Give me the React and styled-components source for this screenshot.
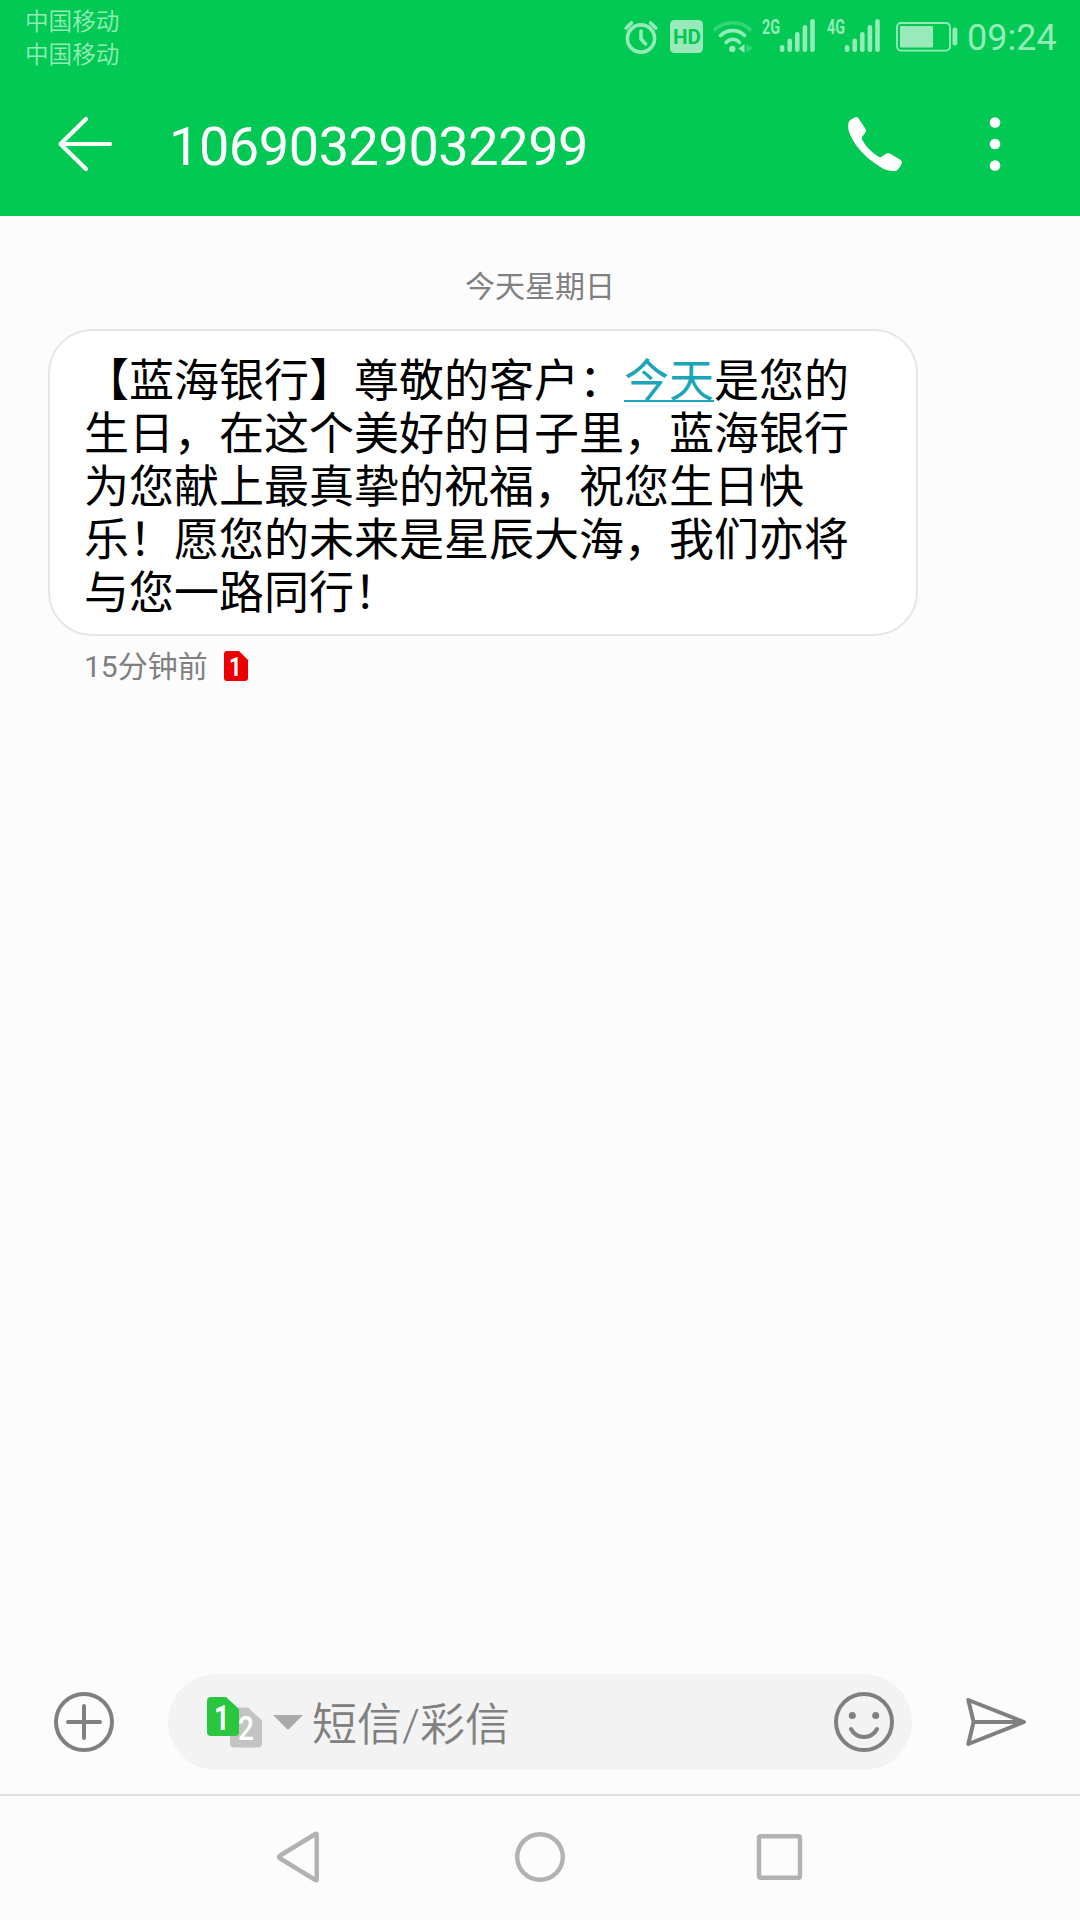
import React from 'react';
import styled, { createGlobalStyle } from 'styled-components';

const GlobalStyle = createGlobalStyle`
  *, *::before, *::after {
    box-sizing: border-box;
  }
  body {
    margin: 0;
    background: #fcfcfc;
    font-family: Roboto, 'Noto Sans CJK SC', sans-serif;
  }
  svg {
    display: block;
    flex-shrink: 0;
    overflow: visible;
  }
`;

const Screen = styled.div`
  display: flex;
  flex-direction: column;
  width: 1080px;
  height: 1920px;
  background: #fcfcfc;
  overflow: hidden;
`;

const StatusBar = styled.div`
  display: flex;
  justify-content: space-between;
  height: 72px;
  padding: 6px 22px 0 25px;
  background: #02c953;
  color: #93ecb8;
`;

const Carriers = styled.div`
  font-size: 23.6px;
  font-weight: 350;
  line-height: 33px;
`;

const StatusIcons = styled.div`
  display: flex;
  align-items: flex-start;
  padding-top: 14px;
`;

const Slot = styled.div`
  margin-left: ${({ gap }) => gap}px;
`;

const Clock = styled.div`
  width: 91px;
  margin: -3px 0 0 9px;
  font-size: 36px;
  line-height: 42px;
  white-space: nowrap;
`;

const AppBar = styled.header`
  display: flex;
  align-items: center;
  height: 144px;
  padding: 0 79px 0 56px;
  background: #02c953;
  color: #fff;
`;

const Title = styled.h1`
  flex: 1;
  margin: 6px 0 0 53px;
  font-size: 54px;
  font-weight: 400;
  line-height: 64px;
  letter-spacing: -0.42px;
`;

const Thread = styled.main`
  flex: 1;
  display: flex;
  flex-direction: column;
  align-items: flex-start;
  padding: 49px 48px 0;
`;

const DateLabel = styled.div`
  align-self: center;
  color: #808080;
  font-size: 30px;
  line-height: 44px;
`;

const Bubble = styled.div`
  width: 870px;
  height: 307px;
  margin-top: 20px;
  padding: 24px 60px 0 34px;
  border: 2px solid #e6e6e6;
  border-radius: 44px;
  background: #fff;
  color: #000;
  font-size: 45px;
  line-height: 53px;
  text-spacing-trim: space-all;
`;

const DateLink = styled.a`
  color: #1ba5b8;
  text-decoration: underline;
  text-decoration-thickness: 2px;
  text-underline-offset: 3px;
`;

const Meta = styled.div`
  display: flex;
  align-items: center;
  gap: 16px;
  margin: 7px 0 0 36px;
  color: #808080;
  font-size: 30px;
  line-height: 44px;
`;

const MetaTime = styled.span`
  padding-top: 2px;
`;

const Composer = styled.div`
  display: flex;
  align-items: center;
  height: 144px;
  padding: 0 54px;
`;

const Field = styled.div`
  display: flex;
  align-items: center;
  width: 744px;
  height: 96px;
  margin: 0 54px;
  padding: 0 18px 0 39px;
  border-radius: 48px;
  background: #f3f3f3;
`;

const Placeholder = styled.span`
  flex: 1;
  margin-left: 9px;
  padding-top: 8px;
  color: #808080;
  font-size: 45px;
  font-weight: 350;
  line-height: 60px;
`;

const NavBar = styled.nav`
  display: flex;
  justify-content: center;
  align-items: center;
  gap: 188px;
  height: 126px;
  padding-bottom: 2px;
  border-top: 2px solid #e0e0e0;
`;

const AlarmIcon = () => (
  <svg width="34" height="34" viewBox="0 0 34 34" fill="none" stroke="currentColor" strokeWidth="3.6" strokeLinecap="round">
    <circle cx="17" cy="18.5" r="13.6" />
    <path d="M2.2 8 7.4 3M31.8 8 26.6 3" />
    <path d="M17 11v8l4.6 5" />
  </svg>
);

const HdIcon = () => (
  <svg width="33" height="33" viewBox="0 0 33 33">
    <rect width="33" height="33" rx="4.5" fill="#99e9bb" />
    <text x="3" y="24" fontSize="21" fontWeight="700" fill="#02c953" textLength="28" lengthAdjust="spacingAndGlyphs">
      HD
    </text>
  </svg>
);

const WifiIcon = () => (
  <svg width="40" height="34" viewBox="0 0 40 34" fill="none" stroke="currentColor" strokeWidth="3.6" strokeLinecap="round">
    <path d="M2 9.5C12 .5 28 .5 37 9.5" opacity=".35" />
    <path d="M7.5 15.5C14.5 9 25 9 31.5 15.5" />
    <path d="M13 22.5c4-4.4 10-4.4 13.5 0" />
    <circle cx="19.3" cy="29" r="3.2" fill="currentColor" stroke="none" />
    <path d="M31.5 24v9l-6-4.5z" fill="currentColor" stroke="none" />
    <path d="M33.5 24v9l6-5z" fill="currentColor" stroke="none" opacity=".35" />
  </svg>
);

const SIGNAL_BARS = [26, 19.5, 13, 6, 0];

const SignalIcon = ({ network }) => (
  <svg width="53" height="34" viewBox="0 0 53 34" fill="currentColor">
    <text x="0" y="14" fontSize="20.5" fontWeight="700" textLength="18" lengthAdjust="spacingAndGlyphs">
      {network}
    </text>
    {SIGNAL_BARS.map((top, i) => (
      <rect key={top} x={17.8 + i * 7.6} y={top - 1} width="4.6" height={33 - top} rx="2.2" />
    ))}
  </svg>
);

const BatteryIcon = () => (
  <svg width="62" height="32" viewBox="0 -2 62 32">
    <rect x="1" y="1" width="53" height="27.6" rx="4" fill="none" stroke="currentColor" strokeWidth="1.8" />
    <rect x="4" y="4" width="33" height="21.4" rx="1" fill="#99e9bb" />
    <rect x="56.5" y="5.5" width="4.8" height="18" rx="2.2" fill="currentColor" />
  </svg>
);

const BackIcon = () => (
  <svg width="60" height="60" viewBox="0 0 60 60" fill="none" stroke="currentColor" strokeWidth="4.2" strokeLinecap="round" strokeLinejoin="round">
    <path d="M30 5 4.5 30 30 55M4.5 30H54" />
  </svg>
);

const PhoneIcon = () => (
  <svg width="54" height="54" viewBox="0 0 54 54" fill="currentColor">
    <path d="M6.5.6Q9-.8 10.4 1.3L17.6 12Q18.7 14 17.3 15.8L14.3 19.6Q13.2 21.3 14.3 23C18 29.8 24 35.8 31 39.9Q32.4 40.6 33.6 39.7L38 36.8Q40.2 35.5 42.2 36.8L52.7 43Q54.8 44.5 53.6 46.8Q52.3 49.8 50.2 52.3Q49.3 53.6 47.3 53.9Q40 54.7 32 49.7C16 40 4 25.5.6 13.5Q-.6 9 .6 5.4Q2.5 2.2 6.5.6Z" />
  </svg>
);

const MoreIcon = () => (
  <svg width="12" height="54" viewBox="0 0 12 54" fill="currentColor">
    <circle cx="6" cy="5.5" r="5.3" />
    <circle cx="6" cy="27" r="5.3" />
    <circle cx="6" cy="48.5" r="5.3" />
  </svg>
);

const SimBadge = () => (
  <svg width="24" height="30" viewBox="0 0 24 30">
    <path d="M3 0H15L24 9V27a3 3 0 0 1-3 3H3a3 3 0 0 1-3-3V3a3 3 0 0 1 3-3Z" fill="#ea0000" />
    <text x="5" y="24.5" fontSize="26" fontWeight="700" fill="#fff" textLength="12.5" lengthAdjust="spacingAndGlyphs">
      1
    </text>
  </svg>
);

const SimSwitch = () => (
  <svg width="96" height="50" viewBox="0 0 96 50">
    <path d="M27 11H41L55 24V47a4 4 0 0 1-4 4H27a4 4 0 0 1-4-4V15a4 4 0 0 1 4-4Z" transform="translate(0 -.5)" fill="#c3c3c3" />
    <text x="31" y="43" fontSize="33" fontWeight="500" fill="#fff" textLength="16" lengthAdjust="spacingAndGlyphs">
      2
    </text>
    <path d="M4 0H19L32 12V35a4 4 0 0 1-4 4H4a4 4 0 0 1-4-4V4a4 4 0 0 1 4-4Z" fill="#2bc640" />
    <text x="7" y="33" fontSize="35" fontWeight="700" fill="#fff" textLength="15.5" lengthAdjust="spacingAndGlyphs">
      1
    </text>
    <path d="M66 18H96L81 33Z" fill="#aaa" />
  </svg>
);

const LineIcon = ({ children }) => (
  <svg width="60" height="60" viewBox="0 0 60 60" fill="none" stroke="#808080" strokeWidth="4" strokeLinecap="round" strokeLinejoin="round">
    {children}
  </svg>
);

const NavIcon = ({ children }) => (
  <svg width="52" height="52" viewBox="0 0 52 52" fill="none" stroke="#b2b2b2" strokeWidth="4.4" strokeLinejoin="round">
    {children}
  </svg>
);

const App = () => (
  <>
    <GlobalStyle />
    <Screen>
      <StatusBar>
        <Carriers>
          <div>中国移动</div>
          <div>中国移动</div>
        </Carriers>
        <StatusIcons>
          <Slot gap={0}>
            <AlarmIcon />
          </Slot>
          <Slot gap={12}>
            <HdIcon />
          </Slot>
          <Slot gap={10}>
            <WifiIcon />
          </Slot>
          <Slot gap={9}>
            <SignalIcon network="2G" />
          </Slot>
          <Slot gap={12}>
            <SignalIcon network="4G" />
          </Slot>
          <Slot gap={16}>
            <BatteryIcon />
          </Slot>
          <Clock>09:24</Clock>
        </StatusIcons>
      </StatusBar>
      <AppBar>
        <BackIcon />
        <Title>10690329032299</Title>
        <PhoneIcon />
        <Slot gap={87}>
          <MoreIcon />
        </Slot>
      </AppBar>
      <Thread>
        <DateLabel>今天星期日</DateLabel>
        <Bubble>
          【蓝海银行】尊敬的客户：<DateLink>今天</DateLink>
          是您的生日，在这个美好的日子里，蓝海银行为您献上最真挚的祝福，祝您生日快乐！愿您的未来是星辰大海，我们亦将与您一路同行！
        </Bubble>
        <Meta>
          <MetaTime>15分钟前</MetaTime>
          <SimBadge />
        </Meta>
      </Thread>
      <Composer>
        <LineIcon>
          <circle cx="30" cy="30" r="28" />
          <path d="M14 30H46M30 14V46" />
        </LineIcon>
        <Field>
          <SimSwitch />
          <Placeholder>短信/彩信</Placeholder>
          <LineIcon>
            <circle cx="30" cy="30" r="28" />
            <circle cx="18.3" cy="23.5" r="3.5" fill="#808080" stroke="none" />
            <circle cx="41.7" cy="23.5" r="3.5" fill="#808080" stroke="none" />
            <path d="M17 37C22.5 47.5 37.5 47.5 43 37" />
          </LineIcon>
        </Field>
        <LineIcon>
          <path d="M2.3 8 58 30 2.3 52 7.6 30ZM7.6 30H56" />
        </LineIcon>
      </Composer>
      <NavBar>
        <NavIcon>
          <path d="M42.7 3.6V48.4Q42.7 49.6 41.4 49L6.2 27.5Q3.6 26 6.2 24.5L41.4 3Q42.7 2.4 42.7 3.6Z" />
        </NavIcon>
        <NavIcon>
          <circle cx="26" cy="26" r="22.8" />
        </NavIcon>
        <NavIcon>
          <rect x="5" y="5.2" width="41" height="41.6" rx="1.5" />
        </NavIcon>
      </NavBar>
    </Screen>
  </>
);

export default App;
